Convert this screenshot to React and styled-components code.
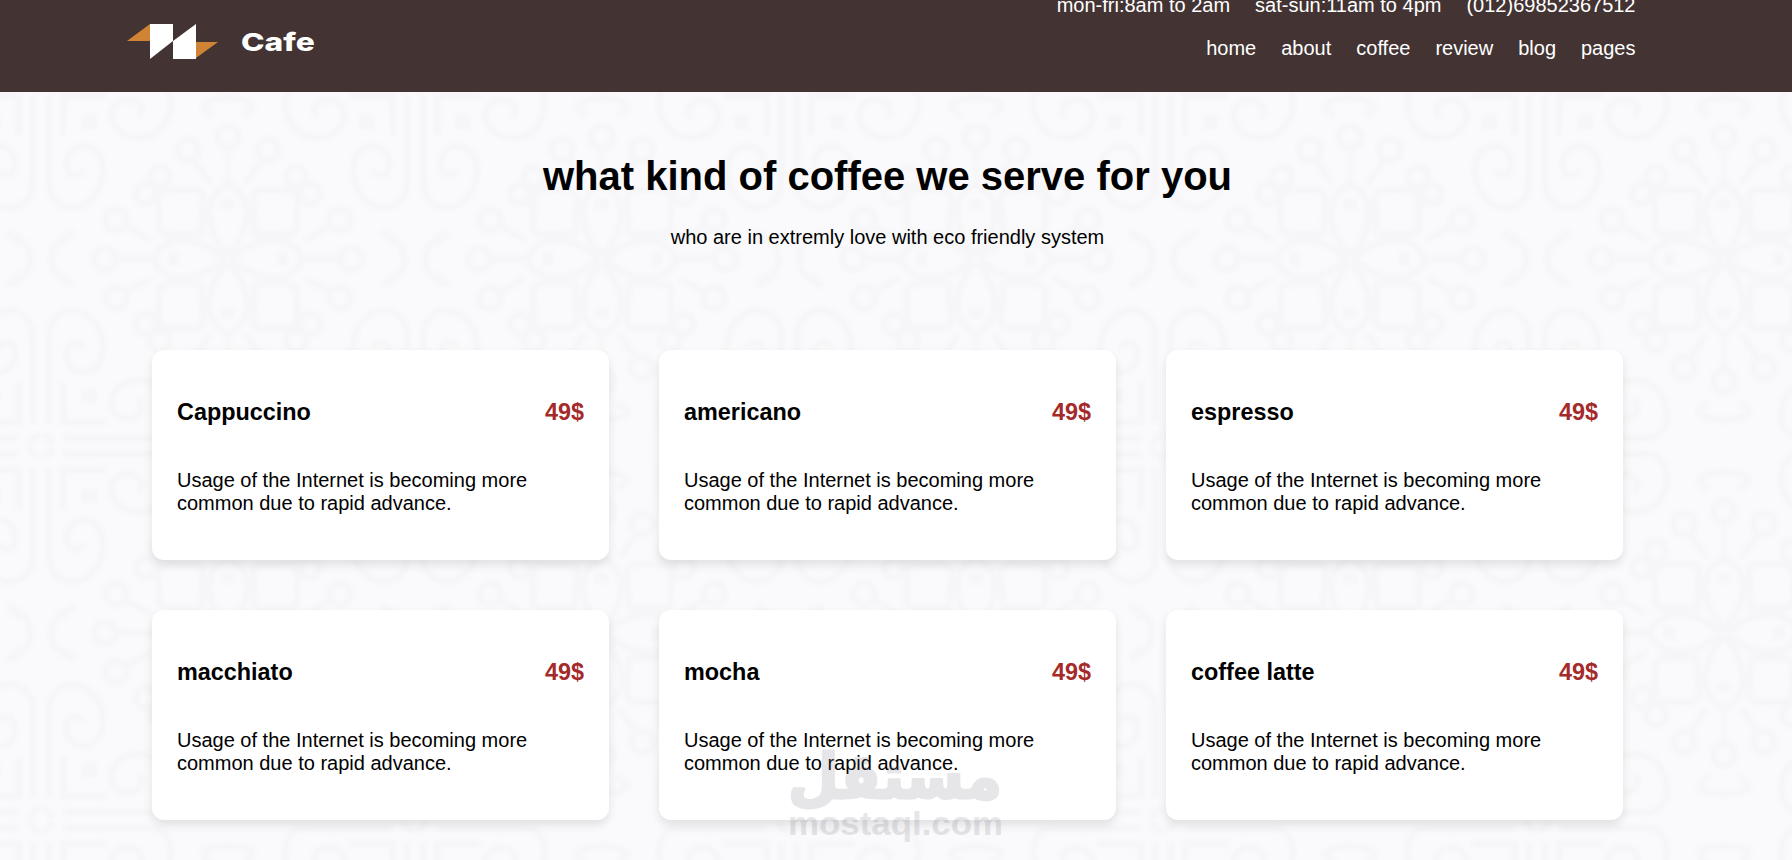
import styled, { createGlobalStyle } from "styled-components";

// one quarter of the ornament, mirrored four times into a 374px tile
const tile = `
<svg xmlns="http://www.w3.org/2000/svg" width="374" height="374" viewBox="0 0 374 374">
  <defs>
    <filter id="s" x="0" y="0" width="1" height="1"><feGaussianBlur stdDeviation="2.2"/></filter>
    <g id="q" fill="none" stroke="#f6f6f8" stroke-width="7">
      <path d="M8 22V112C8 124 18 136 32 136C50 134 62 118 62 98C62 82 52 74 42 74C30 74 24 84 26 96C28 106 40 106 42 97"/>
      <path d="M22 8H112C124 8 130 20 130 34C128 52 116 66 98 66C80 66 70 54 70 42C72 30 82 26 90 28C102 30 104 42 96 46"/>
      <path d="M22 64V24H66"/>
      <path d="M44 46h8v8h-8z"/>
      <path d="M0 11A11 11 0 0 0 11 0"/>
      <path d="M34 160C16 166 10 176 10 190M160 34C166 28 176 26 190 26M34 160L20 172M160 34L172 44"/>
      <circle cx="187" cy="65" r="11"/>
      <path d="M187 76V114"/>
      <circle cx="147" cy="78" r="11"/>
      <path d="M153 88L170 112"/>
      <circle cx="119" cy="105" r="10"/>
      <circle cx="105" cy="122" r="10"/>
      <circle cx="75" cy="148" r="11"/>
      <path d="M85 154L110 168"/>
      <circle cx="64" cy="187" r="11"/>
      <path d="M75 187H112"/>
      <path d="M187 184C164 158 160 124 187 112M184 187C158 164 124 160 112 187"/>
      <path d="M160 162H126Q116 162 118 148V126Q120 118 130 118H154Q162 118 162 128Z"/>
      <path d="M184 131h6v3h-6zM131 184v6h3v-6z"/>
    </g>
  </defs>
  <g filter="url(#s)">
    <use href="#q"/>
    <use href="#q" transform="matrix(-1 0 0 1 374 0)"/>
    <use href="#q" transform="matrix(1 0 0 -1 0 374)"/>
    <use href="#q" transform="matrix(-1 0 0 -1 374 374)"/>
  </g>
</svg>`;

const GlobalStyle = createGlobalStyle`
  * {
    box-sizing: border-box;
  }
  body {
    margin: 0;
    overflow: hidden;
    font-family: "Liberation Sans", Arial, sans-serif;
    font-size: 20px;
    color: #000;
  }
`;

const Page = styled.div`
  position: relative;
  height: 860px;
  overflow: hidden;
  background: #fafafc url("data:image/svg+xml,${encodeURIComponent(tile).replace(/'/g, "%27").replace(/\(/g, "%28").replace(/\)/g, "%29")}") 41px 72px / 374px 374px;
`;

const Header = styled.header`
  display: flex;
  justify-content: space-between;
  height: 92px;
  padding: 0 156.5px 0 127px;
  background-color: #433433;
  color: #fff;
`;

const Logo = styled.div`
  display: flex;
  align-items: flex-start;
  padding-top: 23px;
`;

const LogoMark = styled.svg`
  width: 91px;
  height: 37px;
`;

const LogoName = styled.span`
  margin: 4px 0 0 23px;
  font-family: Inter, sans-serif;
  font-size: 25px;
  font-weight: 800;
  line-height: 30px;
  transform: scaleX(1.27);
  transform-origin: left;
`;

const Menus = styled.div`
  display: flex;
  flex-direction: column;
  align-items: flex-end;
  gap: 20px;
  margin-top: -6px;
`;

const Menu = styled.ul`
  display: flex;
  gap: 25px;
  margin: 0;
  padding: 0;
  list-style: none;
  line-height: 23px;
  white-space: nowrap;
`;

const Intro = styled.section`
  width: 1775px;
  padding-top: 61px;
  height: 258px;
  text-align: center;
`;

const Title = styled.h1`
  margin: 0;
  font-size: 40px;
  line-height: 46px;
`;

const SubTitle = styled.p`
  margin: 27px 0 0;
  line-height: 23px;
`;

const Cards = styled.section`
  display: grid;
  grid-template-columns: repeat(3, 457px);
  gap: 50px;
  padding-left: 152px;
`;

const Card = styled.article`
  height: 210px;
  padding: 48px 25px 0;
  border-radius: 12px;
  background-color: #fff;
  box-shadow: 0 5px 10px rgba(0, 0, 0, 0.1);
`;

const CardTop = styled.div`
  display: flex;
  justify-content: space-between;
  font-size: 23.4px;
  line-height: 28px;
`;

const Name = styled.h2`
  margin: 0;
  font-size: inherit;
`;

const Price = styled.span`
  font-weight: bold;
  color: brown;
`;

const Text = styled.p`
  margin: 43px 0 0;
  line-height: 23px;
`;

const Watermark = styled.div`
  position: absolute;
  left: 788px;
  top: 740px;
  width: 215px;
  height: 110px;
  color: #7d7d87;
  opacity: 0.19;
  pointer-events: none;
`;

const WatermarkArt = styled.svg`
  display: block;
  width: 215px;
  height: 110px;
  overflow: visible;
  fill: currentColor;
`;

const hours = ["mon-fri:8am to 2am", "sat-sun:11am to 4pm", "(012)69852367512"];
const links = ["home", "about", "coffee", "review", "blog", "pages"];
const coffees = ["Cappuccino", "americano", "espresso", "macchiato", "mocha", "coffee latte"];

function App() {
  return (
    <Page>
      <GlobalStyle />
      <Header>
        <Logo>
          <LogoMark viewBox="0 0 91 37">
            <path d="M0 18L23 1V18Z" fill="#cf8435" />
            <path d="M91 19H69V35Z" fill="#cf8435" />
            <path d="M23 1H46V18L23 36Z" fill="#fff" />
            <path d="M46 18L69 1V36H46Z" fill="#fff" />
          </LogoMark>
          <LogoName>Cafe</LogoName>
        </Logo>
        <Menus>
          <Menu>
            {hours.map((item) => (
              <li key={item}>{item}</li>
            ))}
          </Menu>
          <Menu>
            {links.map((link) => (
              <li key={link}>{link}</li>
            ))}
          </Menu>
        </Menus>
      </Header>

      <Intro>
        <Title>what kind of coffee we serve for you</Title>
        <SubTitle>who are in extremly love with eco friendly system</SubTitle>
      </Intro>

      <Cards>
        {coffees.map((coffee) => (
          <Card key={coffee}>
            <CardTop>
              <Name>{coffee}</Name>
              <Price>49$</Price>
            </CardTop>
            <Text>Usage of the Internet is becoming more common due to rapid advance.</Text>
          </Card>
        ))}
      </Cards>

      <Watermark>
        <WatermarkArt viewBox="0 0 215 110">
          <text
            x="107"
            y="58"
            textAnchor="middle"
            direction="rtl"
            fontFamily="DejaVu Sans"
            fontWeight="bold"
            fontSize="62"
            textLength="214"
            lengthAdjust="spacingAndGlyphs"
            stroke="currentColor"
            strokeWidth="3"
            strokeLinejoin="round"
          >
            مستقل
          </text>
          <text
            x="0"
            y="95"
            fontFamily="Liberation Sans"
            fontWeight="bold"
            fontSize="34"
            textLength="215"
            lengthAdjust="spacingAndGlyphs"
          >
            mostaql.com
          </text>
        </WatermarkArt>
      </Watermark>
    </Page>
  );
}

export default App;
